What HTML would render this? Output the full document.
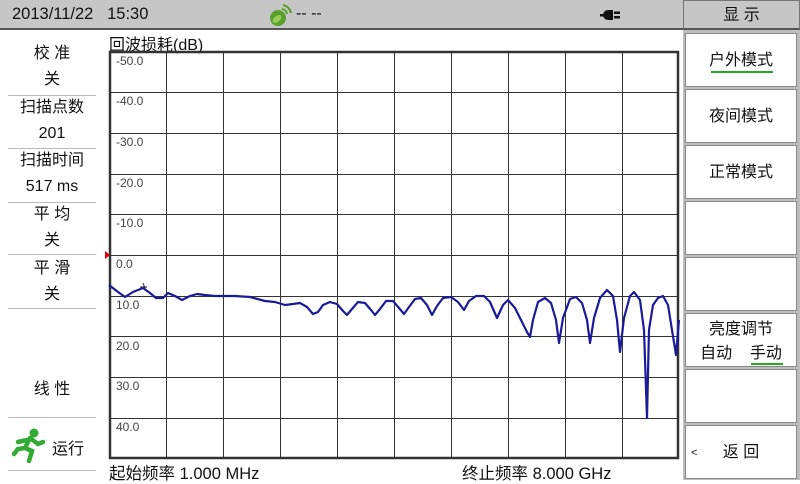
<!DOCTYPE html>
<html><head><meta charset="utf-8"><style>
*{margin:0;padding:0;box-sizing:border-box}
body{width:800px;height:480px;background:#fff;font-family:"Liberation Sans","Noto Sans CJK SC",sans-serif;position:relative;overflow:hidden;color:#111}
.a{position:absolute}
.top{left:0;top:0;width:683px;height:30px;background:#c6c6c6;border-bottom:2px solid #555}
.rp{left:683px;top:0;width:117px;height:480px;background:#bdbdbd}
.hd{left:683px;top:0;width:117px;height:30px;background:#c6c6c6;border:1px solid #777;border-bottom:2px solid #555;text-align:center;font-size:16px;line-height:30px}
.btn{left:685px;width:112px;height:54px;background:#fff;border:1px solid #888;text-align:center;font-size:16px}
.lp{left:8px;width:88px;text-align:center;font-size:16px;line-height:26px}
.sep{left:8px;width:88px;height:1px;background:#bbb}
</style></head><body>
<div class="a top"></div>
<div class="a" style="left:12px;top:5px;font-size:16.5px">2013/11/22&nbsp;&nbsp;&nbsp;15:30</div>
<svg class="a" style="left:266px;top:3px" width="26" height="26"><circle cx="12" cy="15" r="8" fill="#5aa02a"/><ellipse cx="11" cy="16" rx="5" ry="3" fill="#9acd5a" transform="rotate(-40 11 16)"/><path d="M16 6a6 6 0 0 1 5 5M17 2a10 10 0 0 1 8 8" stroke="#5aa02a" stroke-width="2" fill="none"/></svg>
<div class="a" style="left:296px;top:5px;font-size:16px">-- --</div>
<svg class="a" style="left:598px;top:9px" width="28" height="12"><rect x="2" y="5" width="6" height="2.5" fill="#111"/><path d="M10 1h5v10h-5a5 5 0 0 1 0-10z" fill="#111"/><rect x="16" y="2.5" width="6" height="2.5" fill="#111"/><rect x="16" y="7" width="6" height="2.5" fill="#111"/></svg>
<div class="a rp"></div>
<div class="a hd">显 示</div>
<div class="a btn" style="top:33px;line-height:54px">户外模式<div class="a" style="left:25px;top:37px;width:62px;height:2px;background:#2a2"></div></div>
<div class="a btn" style="top:89px;line-height:54px">夜间模式</div>
<div class="a btn" style="top:145px;line-height:54px">正常模式</div>
<div class="a btn" style="top:201px"></div>
<div class="a btn" style="top:257px"></div>
<div class="a btn" style="top:313px;line-height:24px;padding-top:4px">亮度调节<br>自动&nbsp;&nbsp;&nbsp;&nbsp;手动<div class="a" style="left:65px;top:49px;width:32px;height:2px;background:#2a2"></div></div>
<div class="a btn" style="top:369px"></div>
<div class="a btn" style="top:425px;line-height:54px"><span style="position:absolute;left:5px;font-size:11px">&lt;</span>返 回</div>

<div class="a lp" style="top:41px">校 准<br>关</div>
<div class="a sep" style="top:95px"></div>
<div class="a lp" style="top:95px">扫描点数<br>201</div>
<div class="a sep" style="top:148px"></div>
<div class="a lp" style="top:148px">扫描时间<br>517 ms</div>
<div class="a sep" style="top:202px"></div>
<div class="a lp" style="top:202px">平 均<br>关</div>
<div class="a sep" style="top:254px"></div>
<div class="a lp" style="top:256px">平 滑<br>关</div>
<div class="a sep" style="top:308px"></div>
<div class="a lp" style="top:377px">线 性</div>
<div class="a sep" style="top:417px"></div>
<svg class="a" style="left:11px;top:427px" width="34" height="36"><circle cx="23" cy="6" r="4.5" fill="#3a3"/><path d="M19 11l-5 10 7 3-3 10M19 11l8 6 5-2M14 21l-7 1-4 5M16 13l-9 2" stroke="#3a3" stroke-width="4.5" fill="none" stroke-linecap="round"/></svg>
<div class="a" style="left:52px;top:435px;font-size:16px">运行</div>
<div class="a sep" style="top:470px"></div>

<div class="a" style="left:109px;top:31px;font-size:16px">回波损耗(dB)</div>
<div class="a" style="left:109px;top:460px;font-size:16.5px">起始频率 1.000 MHz</div>
<div class="a" style="left:462px;top:460px;font-size:16.5px">终止频率 8.000 GHz</div>

<svg class="a" style="left:0;top:0" width="683" height="480">
<g stroke="#333" stroke-width="1">
<path d="M166.5 51V458M223.5 51V458M280.5 51V458M337.5 51V458M394.5 51V458M451.5 51V458M508.5 51V458M565.5 51V458M622.5 51V458"/>
<path d="M109 92.5H678M109 133.5H678M109 174.5H678M109 214.5H678M109 255.5H678M109 296.5H678M109 336.5H678M109 377.5H678M109 418.5H678"/>
</g>
<rect x="110" y="52" width="568" height="406" fill="none" stroke="#333" stroke-width="2.5"/>
<path d="M105 251l5 4-5 4z" fill="#d00"/>
<g font-size="12" fill="#444" font-family="Liberation Sans,sans-serif">
<text x="116" y="65">-50.0</text><text x="116" y="105">-40.0</text><text x="116" y="146">-30.0</text><text x="116" y="187">-20.0</text><text x="116" y="227">-10.0</text><text x="116" y="268">0.0</text><text x="116" y="309">10.0</text><text x="116" y="350">20.0</text><text x="116" y="390">30.0</text><text x="116" y="431">40.0</text>
</g>
<path d="M143 283l3 8M140 287h7" stroke="#223" stroke-width="1"/>
<polyline fill="none" stroke="#1a1a9a" stroke-width="2.2" stroke-linejoin="round" points="109,285 118,292 125,297 133,292 143,288 150,293 156,298 163,298 168,293 175,296 182,300 190,296 197,294 205,295 215,296 235,296 250,297 265,301 275,302 285,305 293,304 300,303 307,307 313,314 318,312 323,305 330,302 337,304 343,311 347,315 352,309 358,302 365,303 371,310 375,315 380,309 386,301 393,301 399,308 404,314 409,307 415,299 421,298 427,305 432,315 437,306 443,298 451,297 458,302 464,310 469,301 476,296 484,296 490,302 497,318 503,305 508,300 515,308 521,320 527,332 530,337 533,320 538,302 545,298 551,303 556,320 559,343 563,318 570,299 576,297 582,303 587,320 590,343 594,318 600,298 607,290 613,296 617,320 620,352 624,318 630,296 634,292 640,300 644,330 647,418 649,330 653,305 658,298 663,296 668,305 672,330 676,355 679,320"/>
</svg>
</body></html>
